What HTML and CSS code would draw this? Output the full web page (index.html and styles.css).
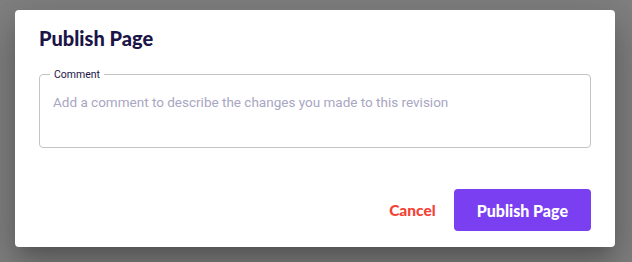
FILE: index.html
```html
<!DOCTYPE html>
<html lang="en">
<head>
	<meta charset="UTF-8">
	<meta name="viewport" content="width=device-width, initial-scale=1.0">
	<title>Publish Page</title>
	<link rel="stylesheet" href="styles.css">
</head>
<body>
<div class="dialog">
	<h2 class="dialogTitle">Publish Page</h2>
	<fieldset class="field">
		<legend>Comment</legend>
		<textarea placeholder="Add a comment to describe the changes you made to this revision"></textarea>
	</fieldset>
	<div class="actions">
		<button class="cancelBtn" type="button">Cancel</button>
		<button class="publishBtn" type="button">Publish Page</button>
	</div>
</div>
</body>
</html>
```

FILE: styles.css
```css
html, body {
	margin: 0;
	padding: 0;
	background: #808080;
	font-family: Lato, "Liberation Sans", sans-serif;
}

body {
	padding: 10px 15px;
	height: 262px;
	box-sizing: border-box;
	overflow: hidden;
}

.dialog {
	width: 600px;
	box-sizing: border-box;
	background: #fff;
	border-radius: 4px;
	padding: 16px 24px;
	box-shadow: 0 11px 15px -7px rgba(0, 0, 0, 0.2), 0 24px 38px 3px rgba(0, 0, 0, 0.14), 0 9px 46px 8px rgba(0, 0, 0, 0.12);
}

.dialogTitle {
	margin: 0;
	font-size: 20px;
	line-height: 24px;
	font-weight: 900;
	color: #1b1547;
}

.field {
	margin: 18px 0 0;
	padding: 0 0 0 10px;
	border: 1px solid #c4c4c4;
	border-radius: 4px;
}

.field legend {
	padding: 0 4px;
	font-family: Roboto, sans-serif;
	font-size: 10.5px;
	line-height: 13px;
	color: #1b1547;
}

.field textarea {
	display: block;
	width: 100%;
	height: 66px;
	box-sizing: border-box;
	border: 0;
	outline: none;
	resize: none;
	margin: 0;
	padding: 11px 3px 0;
	font-family: Roboto, sans-serif;
	font-size: 13.5px;
	line-height: 20px;
	color: #1b1547;
	background: transparent;
}

.field textarea::placeholder {
	color: #a9a6c2;
}

.actions {
	display: flex;
	justify-content: flex-end;
	align-items: center;
	gap: 8px;
	margin-top: 41px;
}

.cancelBtn, .publishBtn {
	font-family: inherit;
	font-weight: 900;
	font-size: 16px;
	border: 0;
	cursor: pointer;
}

.cancelBtn {
	background: none;
	color: #f44336;
	padding: 0 10px;
	height: 42px;
	font-size: 15.5px;
}

.publishBtn {
	background: #7b3ff2;
	color: #fff;
	height: 42px;
	padding: 0 23px;
	border-radius: 4px;
}
```
